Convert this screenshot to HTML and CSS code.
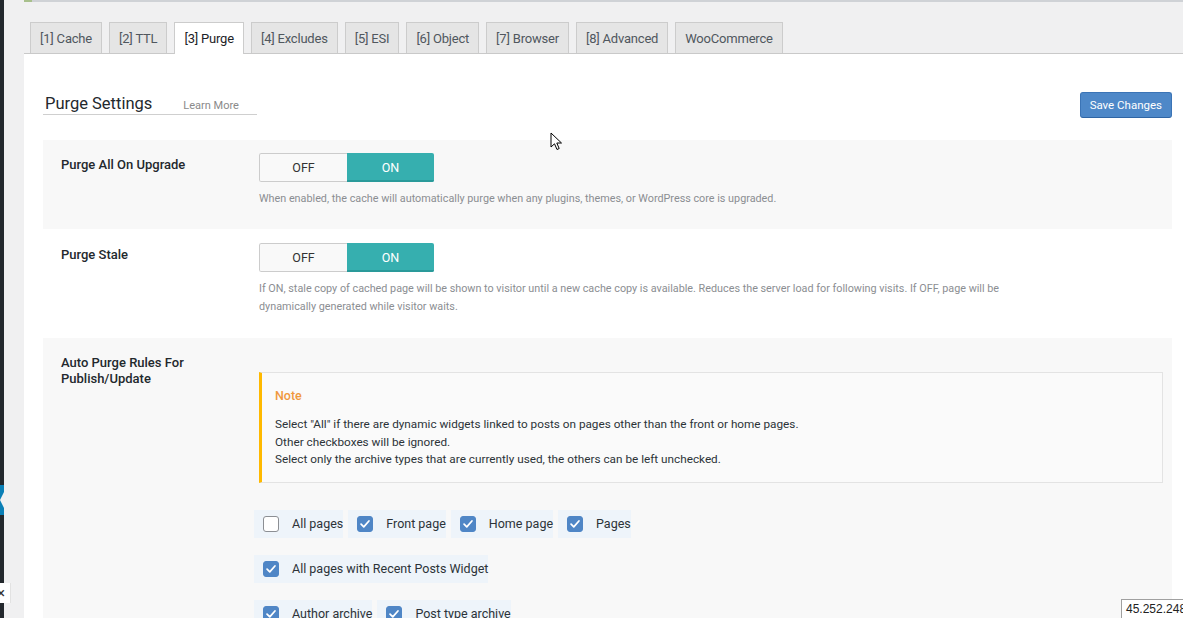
FILE: index.html
```html
<!DOCTYPE html>
<html>
<head>
<meta charset="utf-8">
<link rel="stylesheet" href="styles.css">
</head>
<body>
<div class="screen">
  <aside class="adminmenu">
    <span class="menu-current"></span>
  </aside>
  <main class="wrap">
    <div class="notice-edge"></div>
    <nav class="tabs">
      <a class="tab">[1] Cache</a>
      <a class="tab">[2] TTL</a>
      <a class="tab active">[3] Purge</a>
      <a class="tab">[4] Excludes</a>
      <a class="tab">[5] ESI</a>
      <a class="tab">[6] Object</a>
      <a class="tab">[7] Browser</a>
      <a class="tab">[8] Advanced</a>
      <a class="tab">WooCommerce</a>
    </nav>
    <section class="panel">
      <div class="panel-head">
        <h3 class="title">Purge Settings <a class="learn">Learn More</a></h3>
        <button class="save">Save Changes</button>
      </div>

      <div class="row shaded r1">
        <div class="row-label">Purge All On Upgrade</div>
        <div class="row-body">
          <div class="toggle"><span class="off">OFF</span><span class="on">ON</span></div>
          <p class="desc">When enabled, the cache will automatically purge when any plugins, themes, or WordPress core is upgraded.</p>
        </div>
      </div>

      <div class="row r2">
        <div class="row-label">Purge Stale</div>
        <div class="row-body">
          <div class="toggle"><span class="off">OFF</span><span class="on">ON</span></div>
          <p class="desc">If ON, stale copy of cached page will be shown to visitor until a new cache copy is available. Reduces the server load for following visits. If OFF, page will be<br>dynamically generated while visitor waits.</p>
        </div>
      </div>

      <div class="row shaded r3">
        <div class="row-label">Auto Purge Rules For Publish/Update</div>
        <div class="row-body">
          <div class="note">
            <h4 class="note-title">Note</h4>
            <p class="note-text">Select "All" if there are dynamic widgets linked to posts on pages other than the front or home pages.<br>Other checkboxes will be ignored.<br>Select only the archive types that are currently used, the others can be left unchecked.</p>
          </div>
          <div class="check-row">
            <label class="check"><span class="box"></span>All pages</label>
            <label class="check"><span class="box checked"><svg viewBox="0 0 16 16"><polyline points="3.5,8.2 6.6,11.2 12.5,4.6"/></svg></span>Front page</label>
            <label class="check"><span class="box checked"><svg viewBox="0 0 16 16"><polyline points="3.5,8.2 6.6,11.2 12.5,4.6"/></svg></span>Home page</label>
            <label class="check"><span class="box checked"><svg viewBox="0 0 16 16"><polyline points="3.5,8.2 6.6,11.2 12.5,4.6"/></svg></span>Pages</label>
          </div>
          <div class="check-row">
            <label class="check"><span class="box checked"><svg viewBox="0 0 16 16"><polyline points="3.5,8.2 6.6,11.2 12.5,4.6"/></svg></span>All pages with Recent Posts Widget</label>
          </div>
          <div class="check-row">
            <label class="check"><span class="box checked"><svg viewBox="0 0 16 16"><polyline points="3.5,8.2 6.6,11.2 12.5,4.6"/></svg></span>Author archive</label>
            <label class="check"><span class="box checked"><svg viewBox="0 0 16 16"><polyline points="3.5,8.2 6.6,11.2 12.5,4.6"/></svg></span>Post type archive</label>
          </div>
        </div>
      </div>
    </section>
  </main>
  <span class="close-x">×</span>
  <svg class="cursor" width="13" height="20" viewBox="0 0 13 20"><path d="M1 1 L1 15 L4.5 11.8 L7 17.5 L9.2 16.5 L6.8 11 L11.5 11 Z" fill="#fff" stroke="#000" stroke-width="1" stroke-linejoin="round"/></svg>
  <div class="status">45.252.248.53</div>
</div>
</body>
</html>
```

FILE: styles.css
```css
html, body {
  margin: 0;
  padding: 0;
  overflow: hidden;
  height: 618px;
}
body {
  background: #f0f0f1;
  font-family: Roboto, "Liberation Sans", sans-serif;
  color: #23282d;
}
.screen {
  position: relative;
  display: flex;
  min-height: 618px;
}
.adminmenu {
  position: relative;
  width: 4px;
  flex: none;
  background: #23282d;
}
.menu-current {
  position: absolute;
  left: 0;
  top: 485px;
  width: 4px;
  height: 30px;
  background: #0a7fb6;
}
.menu-current::after {
  content: "";
  position: absolute;
  right: 0;
  top: 7px;
  border-style: solid;
  border-width: 8px 4px 8px 0;
  border-color: transparent #f0f0f1 transparent transparent;
}
.wrap {
  flex: 1;
  padding-left: 20px;
  min-width: 0;
}
.notice-edge {
  height: 2px;
  background: linear-gradient(to right, #a8c08c 0, #a8c08c 8px, #cfd2d6 8px);
}
.tabs {
  display: flex;
  gap: 7px;
  margin-top: 20px;
  padding-left: 6px;
  border-bottom: 1px solid #c9c9c9;
  height: 31px;
}
.tab {
  display: block;
  box-sizing: border-box;
  height: 31px;
  padding: 1px 9px 0;
  line-height: 30px;
  font-size: 13px;
  letter-spacing: -0.2px;
  color: #50575e;
  background: #e5e5e5;
  border: 1px solid #cccccc;
  border-bottom: none;
}
.tab.active {
  background: #fff;
  color: #1d2327;
  height: 32px;
  position: relative;
  z-index: 1;
}
.panel {
  background: #fff;
  padding: 0 11px 0 19px;
  min-height: 600px;
}
.panel-head {
  display: flex;
  justify-content: space-between;
  align-items: flex-end;
  padding-top: 38px;
  height: 26px;
  margin-bottom: 22px;
}
.title {
  margin: 0 0 3px;
  padding: 0 18px 0 2px;
  font-size: 16.5px;
  font-weight: 400;
  line-height: 17px;
  color: #23282d;
  border-bottom: 1px solid #cfcfcf;
  display: flex;
  align-items: baseline;
}
.learn {
  margin-left: 31px;
  font-size: 11px;
  color: #8a8a8a;
}
.save {
  height: 26px;
  box-sizing: border-box;
  padding: 0 9px;
  font-family: inherit;
  font-size: 11.5px;
  color: #fff;
  background: #4e88c8;
  border: 1px solid #3b74b6;
  border-bottom-color: #2f65a4;
  border-radius: 3px;
}
.row {
  display: flex;
  padding: 13px 9px 21px 18px;
}
.row.shaded {
  background: #f8f8f8;
}
.r2 {
  padding-top: 14px;
  padding-bottom: 22px;
}
.r3 {
  padding-top: 14px;
  min-height: 300px;
}
.row-label {
  width: 170px;
  margin-right: 28px;
  flex: none;
  padding-top: 4px;
  font-size: 13px;
  font-weight: 500;
  line-height: 16px;
  color: #23282d;
}
.r3 .row-label {
  padding-top: 3px;
}
.row-body {
  flex: 1;
}
.toggle {
  display: flex;
  width: 175px;
  height: 29px;
  box-sizing: border-box;
  font-size: 12.5px;
  border-radius: 2px;
  overflow: hidden;
}
.toggle span {
  flex: 1;
  display: flex;
  align-items: center;
  justify-content: center;
  box-sizing: border-box;
}
.toggle .off {
  background: #f9f9f9;
  color: #333;
  border: 1px solid #cccccc;
  border-right: none;
  border-radius: 2px 0 0 2px;
}
.toggle .on {
  background: #36afaf;
  color: #fff;
  border-bottom: 2px solid #2a9a9a;
  padding-top: 2px;
}
.desc {
  margin: 8px 0 0;
  font-size: 10.8px;
  line-height: 18px;
  color: #8b8e92;
}
.note {
  margin: 20px 0 0;
  background: #fafafa;
  border: 1px solid #e3e3e3;
  border-left: 3px solid #ffb900;
  padding: 13px 12px 13px 13px;
}
.note-title {
  margin: 0;
  font-size: 12.5px;
  font-weight: 500;
  line-height: 18px;
  color: #f0983e;
  padding-top: 1px;
}
.note-text {
  margin: 11px 0 0;
  font-size: 11.75px;
  line-height: 17.5px;
  color: #2c3338;
}
.check-row {
  display: flex;
  gap: 5px;
  margin-left: -5px;
  margin-top: 17px;
}
.note + .check-row {
  margin-top: 27px;
}
.check {
  display: flex;
  align-items: center;
  height: 28px;
  padding: 0 0 0 9px;
  background: #eef4fa;
  font-size: 12.5px;
  color: #2c3338;
}
.box {
  width: 16px;
  height: 16px;
  box-sizing: border-box;
  margin-right: 13px;
  background: #fff;
  border: 1px solid #8c8f94;
  border-radius: 3px;
  flex: none;
}
.box.checked {
  background: #4f86c6;
  border-color: #4f86c6;
}
.box svg {
  display: block;
  width: 14px;
  height: 14px;
}
.box polyline {
  fill: none;
  stroke: #fff;
  stroke-width: 2;
  stroke-linecap: round;
  stroke-linejoin: round;
}
.close-x {
  position: absolute;
  left: 0;
  top: 583px;
  width: 10px;
  height: 20px;
  background: #fff;
  border-right: 1px solid #e2e2e2;
  font-size: 15px;
  line-height: 20px;
  color: #333;
  text-indent: -3px;
  overflow: hidden;
}
.cursor {
  position: absolute;
  left: 550px;
  top: 132px;
}
.status {
  position: absolute;
  left: 1121px;
  top: 599px;
  height: 19px;
  box-sizing: border-box;
  padding: 0 4px;
  background: #fff;
  border: 1px solid #a0a0a0;
  border-bottom: none;
  font-family: "Liberation Sans", Arial, sans-serif;
  font-size: 12px;
  line-height: 19px;
  color: #222;
  white-space: nowrap;
}
```
